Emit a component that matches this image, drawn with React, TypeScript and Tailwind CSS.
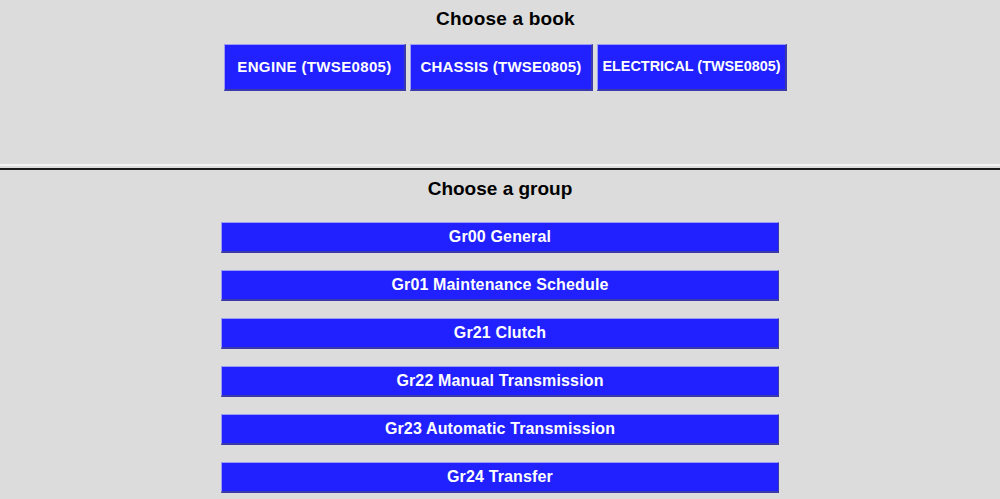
import React from "react";

const books = [
  { label: "ENGINE (TWSE0805)", w: "w-[182px]", t: "text-[15px] tracking-[0.35px] font-bold" },
  { label: "CHASSIS (TWSE0805)", w: "w-[183px]", t: "text-[15px] tracking-[0.2px] font-bold" },
  { label: "ELECTRICAL (TWSE0805)", w: "w-[190px]", t: "text-[14.4px] font-semibold" },
];

const groups = [
  "Gr00 General",
  "Gr01 Maintenance Schedule",
  "Gr21 Clutch",
  "Gr22 Manual Transmission",
  "Gr23 Automatic Transmission",
  "Gr24 Transfer",
];

export default function App() {
  return (
    <div
      className="w-[1000px] h-[499px] overflow-hidden bg-[#dcdcdc] text-black"
      style={{ fontFamily: '"Liberation Sans", Arial, sans-serif' }}
    >
      <div className="h-[164px] flex flex-col items-center pt-[7px] pl-[11px]">
        <div className="text-[19px] font-bold leading-[24px] tracking-[0.2px]">Choose a book</div>
        <div className="flex gap-[4px] mt-[13px]">
          {books.map((b) => (
            <div
              key={b.label}
              className={`${b.w} h-[47px] flex items-center justify-center bg-[#2121ff] border-t border-l border-[#9d9df5] border-r-[2px] border-b-[2px] border-r-[#3a3aa8] border-b-[#3a3aa8] text-white ${b.t}`}
            >
              {b.label}
            </div>
          ))}
        </div>
      </div>
      <div className="h-[2px] bg-[#f4f4f4]" />
      <div className="h-[2px]" />
      <div className="h-[2px] bg-[#1c1c1c]" />
      <div className="flex flex-col items-center">
        <div className="text-[19px] font-bold leading-[24px] mt-[7px]">Choose a group</div>
        <div className="flex flex-col gap-[17px] mt-[21px] w-[558px]">
          {groups.map((g) => (
            <div
              key={g}
              className="h-[31px] flex items-center justify-center bg-[#2121ff] border-t border-l border-[#9d9df5] border-r border-b-[2px] border-r-[#3a3aa8] border-b-[#3a3aa8] text-white text-[16px] tracking-[0.15px] font-bold"
            >
              {g}
            </div>
          ))}
        </div>
      </div>
    </div>
  );
}
